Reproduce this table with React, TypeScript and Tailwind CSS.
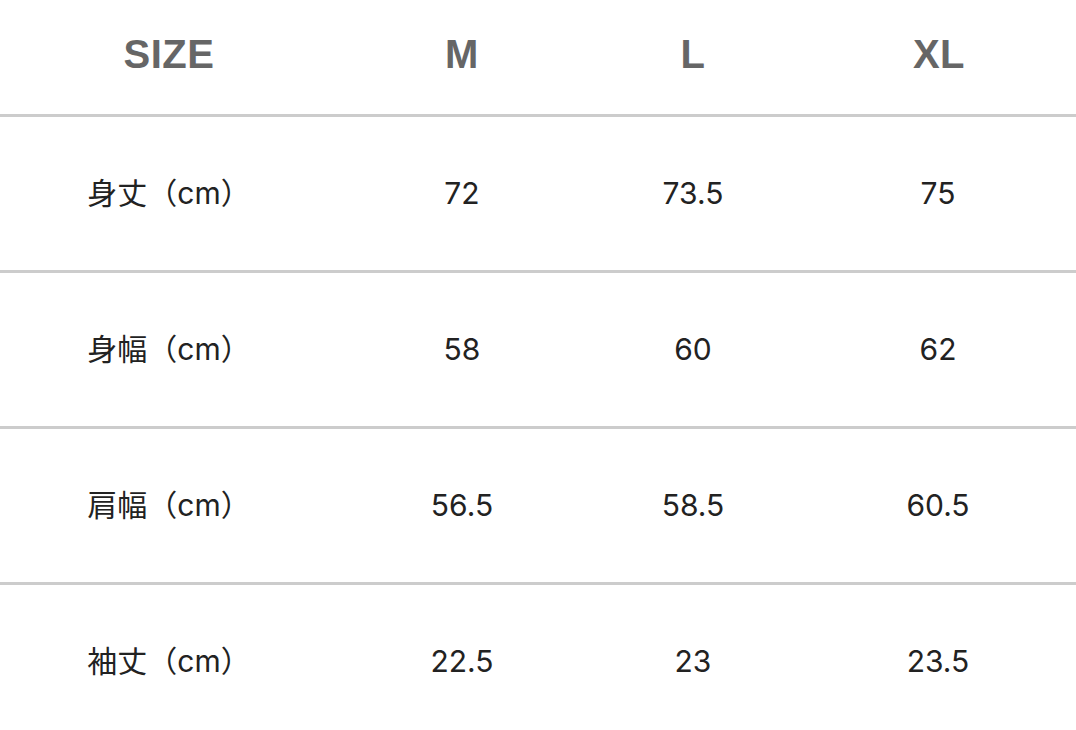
import React from "react";

const rows: [string, string, string, string][] = [
  ["身丈（cm）", "72", "73.5", "75"],
  ["身幅（cm）", "58", "60", "62"],
  ["肩幅（cm）", "56.5", "58.5", "60.5"],
  ["袖丈（cm）", "22.5", "23", "23.5"],
];

export default function App() {
  return (
    <div className="w-[1076px] h-[730px] overflow-hidden bg-white">
      <div className="grid grid-cols-[338px_248px_214px_276px] h-[117px] items-center border-b-[3px] border-[#cccccc] text-[40px] font-bold text-[#666666] font-['Liberation_Sans',Arial,sans-serif] tracking-[0.5px]">
        <div className="text-center pb-[6px]">SIZE</div>
        <div className="text-center pb-[6px]">M</div>
        <div className="text-center pb-[6px]">L</div>
        <div className="text-center pb-[6px] pl-[2px]">XL</div>
      </div>
      {rows.map((r, i) => (
        <div
          key={i}
          className="grid grid-cols-[338px_248px_214px_276px] h-[156px] items-center border-b-[3px] border-[#cccccc] text-[30px] text-[#222222] font-['Inter','Noto_Sans_CJK_JP',sans-serif]"
        >
          <div className="text-center">{r[0]}</div>
          <div className="text-center">{r[1]}</div>
          <div className="text-center">{r[2]}</div>
          <div className="text-center">{r[3]}</div>
        </div>
      ))}
    </div>
  );
}
